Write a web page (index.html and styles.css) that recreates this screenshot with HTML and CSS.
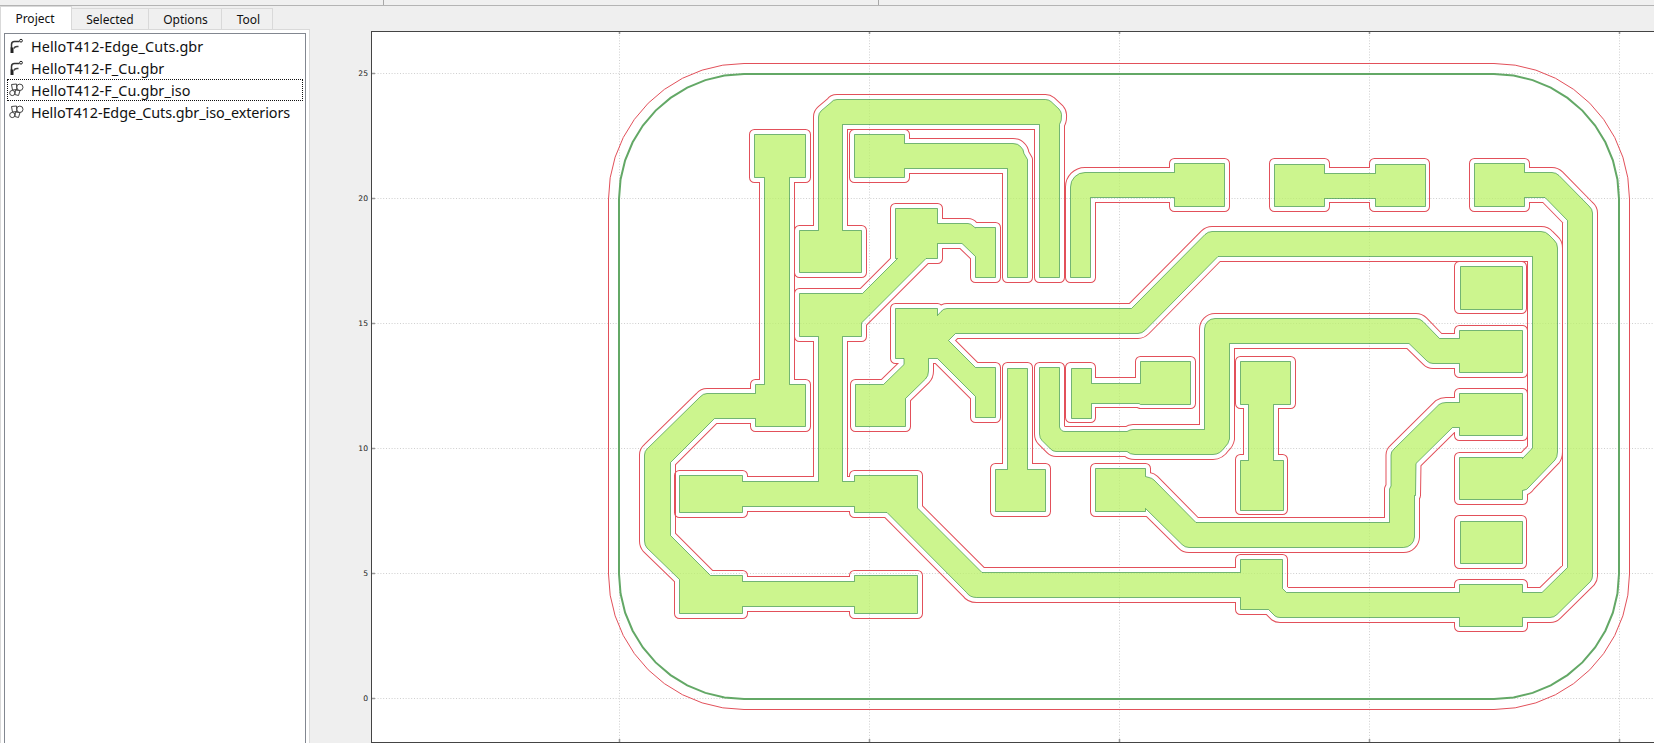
FILE: index.html
```html
<!DOCTYPE html>
<html lang="en">
<head>
<meta charset="utf-8">
<title>HelloT412</title>
<link rel="stylesheet" href="styles.css">
</head>
<body>
<svg class="defs" width="0" height="0">
  <symbol id="gerber" viewBox="0 0 15 16">
    <path d="M2.500 10V6.500Q2.500 3.500 5.500 3.500H10.500" fill="none" stroke="#333" stroke-width="1.500"/>
    <path d="M1.500 9.500h3V15H1.500z" fill="#222"/>
    <path d="M5 10.500Q5.500 8.500 8 8.500H9.500" fill="none" stroke="#444" stroke-width="1.300"/>
    <circle cx="12" cy="2.700" r="1.400" fill="#fff" stroke="#222"/>
  </symbol>
  <symbol id="geometry" viewBox="0 0 15 16">
    <g fill="none" stroke="#444" stroke-width="1">
      <path d="M2.500 2.500L7.500 2L8 7.500L3.500 8Z"/>
      <circle cx="10.800" cy="5.300" r="3.200"/>
      <circle cx="3.300" cy="11" r="2.600"/>
      <path d="M6.500 8L11 8.500L9.500 13.500L5.800 12.500Z"/>
    </g>
  </symbol>
</svg>
<div class="app">
  <header class="toolbar"><span class="bar-a"></span><span class="bar-b"></span><span class="bar-c"></span></header>
  <div class="body">
    <aside class="side">
      <nav class="tabs">
        <div class="tab active">Project</div>
        <div class="tab selected-tab">Selected</div>
        <div class="tab options-tab">Options</div>
        <div class="tab tool-tab">Tool</div>
      </nav>
      <div class="pane">
        <ul class="list">
          <li class="item"><svg class="icon"><use href="#gerber"/></svg><span>HelloT412-Edge_Cuts.gbr</span></li>
          <li class="item"><svg class="icon"><use href="#gerber"/></svg><span>HelloT412-F_Cu.gbr</span></li>
          <li class="item current"><svg class="icon"><use href="#geometry"/></svg><span>HelloT412-F_Cu.gbr_iso</span></li>
          <li class="item long"><svg class="icon"><use href="#geometry"/></svg><span>HelloT412-Edge_Cuts.gbr_iso_exteriors</span></li>
        </ul>
      </div>
    </aside>
    <main class="plot"><svg id="plot" viewBox="310 6 1344 737" width="1344" height="737"></svg></main>
  </div>
</div>
<script src="plot.js"></script>
</body>
</html>
```
FILE: styles.css
```css
* { box-sizing: border-box; }
body { margin: 0; background: #efefef; overflow: hidden; font-family: "Noto Sans", "Open Sans", sans-serif; color: #111; }
.defs { display: block; }
.app { width: 1654px; height: 743px; display: flex; flex-direction: column; }
.toolbar { height: 6px; display: flex; border-bottom: 1px solid #b4b4b4; background: #f0f0f0; flex: none; }
.bar-a { width: 384px; border-right: 1px solid #a8a8a8; }
.bar-b { width: 495px; border-right: 1px solid #a8a8a8; }
.body { flex: 1; display: flex; min-height: 0; }
.side { width: 310px; display: flex; flex-direction: column; flex: none; }
.tabs { height: 23px; display: flex; align-items: flex-end; flex: none; }
.tab { height: 21px; border: 1px solid #d9d9d9; border-left: 0; border-bottom: 0; background: #f0f0f0; font-size: 12px; line-height: 21px; text-align: center; white-space: nowrap; }
.active { width: 72px; height: 24px; margin-bottom: -1px; background: #fff; border-left: 1px solid #d9d9d9; line-height: 23px; padding-right: 2px; position: relative; }
.selected-tab { width: 77px; }
.options-tab { width: 73px; padding-left: 1px; }
.tool-tab { width: 51px; padding-left: 3px; }
.pane { flex: 1; background: #fff; border: 1px solid #d9d9d9; border-bottom: 0; padding: 3px 3px 0; display: flex; }
.list { flex: 1; margin: 0; padding: 1px 2px; list-style: none; border: 1px solid #828790; border-bottom: 0; }
.item { height: 22px; display: flex; align-items: center; gap: 7px; padding-left: 1px; font-size: 14.4px; letter-spacing: 0.1px; white-space: nowrap; border: 1px solid transparent; }
.long { letter-spacing: -0.08px; }
.current { border: 1px dotted #111; }
.icon { width: 15px; height: 16px; flex: none; }
.plot { flex: 1; display: flex; }
.axis { font: 7.6px "DejaVu Sans", sans-serif; fill: #222; text-anchor: end; }
.grid { stroke: #cfcfcf; stroke-width: 1; stroke-dasharray: 1 1.8; fill: none; }
.tick { stroke: #999; stroke-width: 1.5; }
.copper { fill: #bbf268; fill-opacity: .75; stroke: #006e20; stroke-opacity: .5; stroke-width: 1; }
.iso { stroke: #e2505a; stroke-width: 11; stroke-linejoin: round; fill: none; }
.edge { stroke: #63a866; stroke-width: 2; fill: none; }
.margin { stroke: #e2505a; stroke-width: 1; fill: none; }
.frame { fill: #fff; stroke: #444; stroke-width: 1; }
```
FILE: plot.js
```js
const svg = document.getElementById('plot');
const NS = 'http://www.w3.org/2000/svg';

function add(parent, name, attrs, text) {
  const el = document.createElementNS(NS, name);
  for (const key in attrs) el.setAttribute(key, attrs[key]);
  if (text !== undefined) el.textContent = text;
  parent.appendChild(el);
  return el;
}

// Rounded board outline, each corner approximated by ten chords.
function board(offset) {
  const r = 125 + offset;
  const corners = [[744, 199, 180], [1494, 199, 270], [1494, 574, 0], [744, 574, 90]];
  const pts = [];
  for (const [cx, cy, start] of corners) {
    for (let i = 0; i <= 10; i++) {
      const a = (start + i * 9) * Math.PI / 180;
      pts.push((cx + r * Math.cos(a)).toFixed(2) + ' ' + (cy + r * Math.sin(a)).toFixed(2));
    }
  }
  return 'M' + pts.join('L') + 'Z';
}

// Copper regions; "iso" overrides the contour used for the isolation path.
const nets = [
  { d: 'M754.5 134.5H805.5V177.5H789.5V384.5H805.5V426.5H755.5V418.5H714.5L670.5 462.5V535.5L710.5 575.5H742.5V581.5H854.5V575.5H917.5V613.5H854.5V606.5H742.5V613.5H679.5V579.5L647 548Q644.5 545 644.5 541V455Q644.5 451 647.5 448.5L700 397Q703 393.5 707 393.5H755.5V384.5H764.5V177.5H754.5Z' },
  { d: 'M799.5 230.5H818.5V117Q818.5 113 821.5 110.5L831 102.5Q833 99.5 837 99.5H1045.5Q1048.5 99.5 1051 101.5L1059 109Q1061.5 112 1061.5 114.5Q1062 121 1059.5 124.5V277.5H1039.5V124.5H842.5V230.5H861.5V272.5H799.5Z' },
  { d: 'M854.5 134.5H904.5V143.5H1013Q1018 143.5 1020.5 146.5Q1023.5 149 1024 153.5L1027.5 159.5V277.5H1007.5V168.5H904.5V177.5H854.5Z' },
  { d: 'M895.5 208.5H937.5V223.5H968Q971 223.5 973 226L975.5 228V227.5H995.5V277.5H975.5V256.5L962 243.5H937.5V258.5H926L861.5 323V336.5H842.5V481.5H854.5V475.5H917.5V508L982 572.5H1240.5V559.5H1282.5V588.5L1286.5 592.5H1459.5V584.5H1522.5V592.5H1542L1567.5 567.5V220.5L1545 197.5H1524.5V206.5H1474.5V163.5H1524.5V172.5H1552Q1556 172.5 1559 175.5L1589 206Q1592.5 209 1592.5 213V576Q1592.5 579 1590.5 581.5L1557 614.5Q1554 617.5 1550 617.5H1522.5V626.5H1459.5V617.5H1280Q1277 617.5 1275 616L1268.5 609.5H1240.5V597.5H976.5Q970 597.5 966.5 592.5L887 512.5H854.5V506.5H742.5V512.5H679.5V475.5H742.5V481.5H818.5V336.5H799.5V293.5H862.5L897.5 258.5H895.5Z' },
  { d: 'M895.5 308.5H937.5V315.5L941 311.5Q943.5 308.5 947 308.5H1131.5L1205 234.5Q1208 231.5 1212 231.5H1541Q1546 231.5 1549 235L1554 240Q1557.5 243 1557.5 248V452Q1557.5 457 1555 460L1530 486Q1527 490.5 1522.5 490.5V499.5H1459.5V457.5H1522.5V458.5L1532.5 448V256.5H1218L1145.5 330Q1142 333.5 1138 333.5H955.5L948.5 340.5L975.5 367.5H995.5V417.5H975.5V396.5L937.5 358.5H928.5V371Q928.5 376 925.5 379L905.5 398.5V426.5H855.5V384.5H883.5L904 364.5V358.5H895.5Z' },
  { d: 'M1070.5 277.5V187A14.5 14.5 0 0 1 1085 172.5H1174.5V163.5H1224.5V206.5H1174.5V197.5H1090.5V277.5Z' },
  { d: 'M1274.5 164.5H1324.5V173.5H1375.5V164.5H1425.5V206.5H1375.5V198.5H1324.5V206.5H1274.5Z',
    iso: 'M1274.5 163.5H1324.5V172.5H1374.5V163.5H1424.5V206.5H1374.5V197.5H1324.5V206.5H1274.5Z' },
  { d: 'M1460.5 266.5H1522.5V309.5H1460.5Z', iso: 'M1459.5 266.5H1521.5V308.5H1459.5Z' },
  { d: 'M1460.5 521.5H1522.5V563.5H1460.5Z', iso: 'M1459.5 520.5H1521.5V563.5H1459.5Z' },
  { d: 'M1007.5 368.5H1027.5V469.5H1045.5V511.5H995.5V469.5H1007.5Z', iso: 'M1007.5 367.5H1027.5V468.5H1045.5V511.5H995.5V468.5H1007.5Z' },
  { d: 'M1039.5 367.5H1059.5V427Q1061 431.5 1065 431.5H1127Q1130 429.5 1133 429.5H1204.5V329A10.5 10.5 0 0 1 1215 318.5H1416Q1420 318.5 1423 321.5L1439.5 338.5H1459.5V330.5H1522.5V372.5H1459.5V363.5H1433Q1429.5 363.5 1427 361L1409 343.5H1229.5V439Q1228.5 444 1225 447Q1220 454.5 1213 454.5H1135Q1130 454.5 1127 451.5H1056Q1053 451.5 1050.5 449L1042 440.5Q1039.5 438 1039.5 434Z' },
  { d: 'M1071.5 368.5H1091.5V383.5H1140.5V361.5H1190.5V404.5H1140.5L1139 403.5H1091.5V418.5H1071.5Z', iso: 'M1070.5 367.5H1090.5V382.5H1140.5V361.5H1190.5V403.5H1140.5L1138.5 402.5H1090.5V417.5H1070.5Z' },
  { d: 'M1240.5 361.5H1290.5V404.5H1273.5V460.5H1283.5V510.5H1240.5V460.5H1248.5V404.5H1240.5Z', iso: 'M1240.5 361.5H1290.5V403.5H1273.5V459.5H1282.5V509.5H1240.5V459.5H1248.5V403.5H1240.5Z' },
  { d: 'M1095.5 468.5H1145.5V476.5L1149 477.5Q1152 478 1154 480L1196 522.5H1389.5V489L1391 486V455Q1391 451.5 1394 449L1439 404.5Q1442 402.5 1446 402.5H1459.5V393.5H1522.5V435.5H1459.5V427.5H1452.5L1416 463.5L1415.5 495.5H1414.5V537A11 11 0 0 1 1403.5 547.5H1189Q1185 547.5 1182 544.5L1145.5 508.5V511.5H1095.5Z' }
];

add(svg, 'rect', { class: 'frame', x: 371.5, y: 31.5, width: 1300, height: 711 });

const xs = [619, 869, 1119, 1369, 1619];
const ys = [74, 199, 324, 449, 574, 699];
for (const x of xs) {
  add(svg, 'path', { class: 'grid', d: `M${x + 0.5} 32V742` });
  add(svg, 'path', { class: 'tick', d: `M${x + 0.5} 32v2M${x + 0.5} 739v3` });
}
ys.forEach((y, i) => {
  add(svg, 'path', { class: 'grid', d: `M372 ${y - 0.5}H1654` });
  add(svg, 'path', { class: 'tick', d: `M372 ${y - 0.5}h3` });
  add(svg, 'text', { class: 'axis', x: 368, y: y + 2 }, String(25 - i * 5));
});

nets.forEach((net, i) => {
  const contour = net.iso || net.d;
  const mask = add(svg, 'mask', { id: 'm' + i, maskUnits: 'userSpaceOnUse', x: 310, y: 6, width: 1344, height: 737 });
  add(mask, 'rect', { x: 310, y: 6, width: 1344, height: 737, fill: '#fff' });
  add(mask, 'path', { d: contour, fill: '#000', stroke: '#000', 'stroke-width': 9, 'stroke-linejoin': 'round' });
  add(svg, 'path', { class: 'iso', d: contour, mask: `url(#m${i})` });
  add(svg, 'path', { class: 'copper', d: net.d });
});

add(svg, 'path', { class: 'margin', d: board(10.5) });
add(svg, 'path', { class: 'edge', d: board(0) });
```
